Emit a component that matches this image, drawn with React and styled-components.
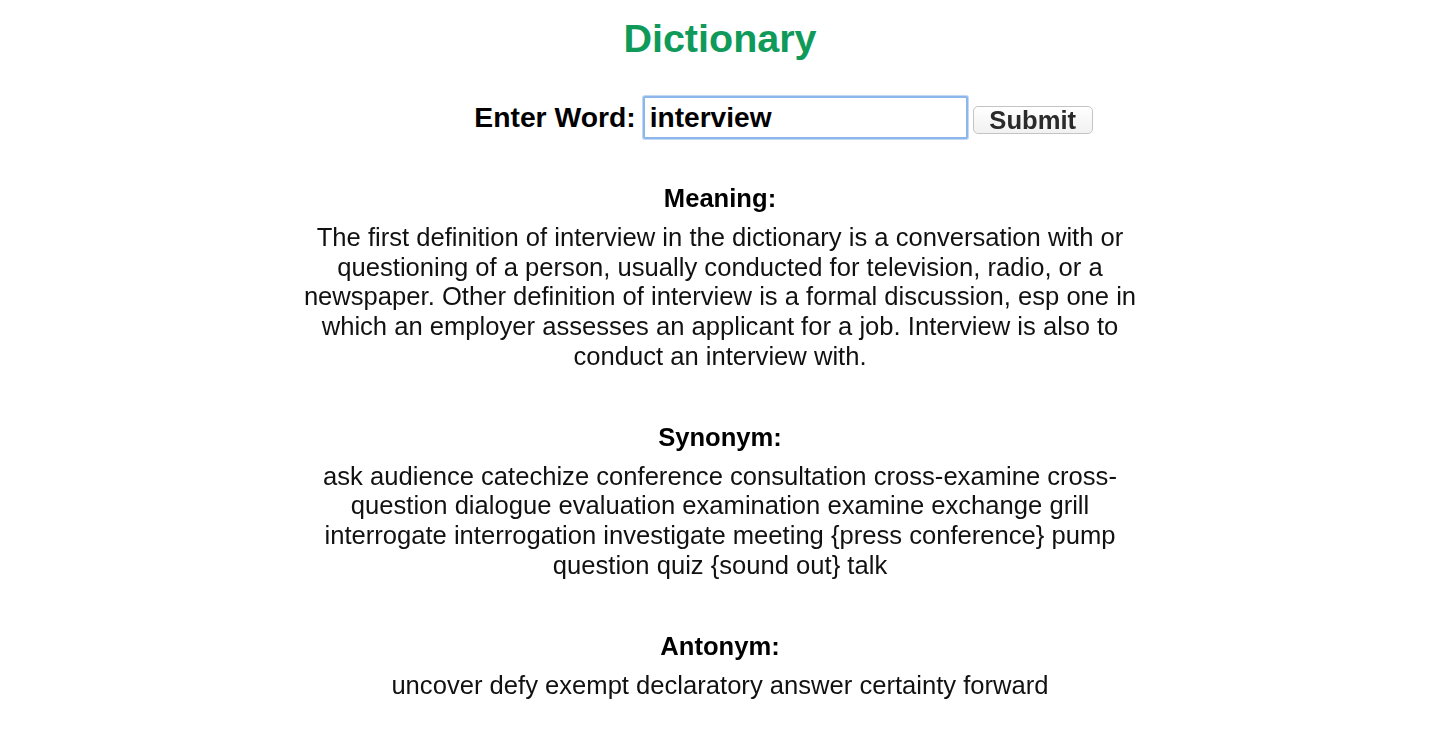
import React, { useEffect, useRef } from "react";
import styled, { createGlobalStyle } from "styled-components";

const Global = createGlobalStyle`
  html, body { margin: 0; padding: 0; background: #fff; }
  body { font-family: "Liberation Sans", Arial, sans-serif; color: #000; }
`;

const Page = styled.div`
  display: flex;
  flex-direction: column;
  align-items: center;
  padding-top: 15px;
`;

const Title = styled.h1`
  margin: 0;
  font-size: 39.5px;
  line-height: 46px;
  font-weight: 700;
  color: #0f9a5a;
`;

const Form = styled.form`
  display: flex;
  align-items: center;
  margin-top: 35px;
  padding-left: 127px;
`;

const Label = styled.label`
  font-size: 28.3px;
  font-weight: 700;
  margin-right: 7px;
`;

const Input = styled.input`
  box-sizing: border-box;
  width: 325px;
  height: 43px;
  border: 2px solid #8db6ea;
  box-shadow: 0 0 0 1px #c2d9f5;
  border-radius: 2px;
  outline: none;
  padding: 0 0 0 5px;
  font-family: "Liberation Sans", Arial, sans-serif;
  font-size: 28.1px;
  font-weight: 700;
  color: #000;
  caret-color: #000;
`;

const Button = styled.button`
  box-sizing: border-box;
  width: 120px;
  height: 28px;
  margin: 5px 0 0 5px;
  padding: 0;
  border: 1px solid #c4c4c4;
  border-radius: 5px;
  background: linear-gradient(#ffffff, #f1f1f1);
  font-family: "Liberation Sans", Arial, sans-serif;
  font-size: 25.6px;
  line-height: 26px;
  font-weight: 700;
  color: #2a2a2a;
`;

const Results = styled.div`
  display: flex;
  flex-direction: column;
  gap: 51.6px;
  width: 860px;
  margin-top: 45px;
  text-align: center;
`;

const Section = styled.section`
  display: flex;
  flex-direction: column;
  gap: 9.4px;
`;

const Heading = styled.h3`
  margin: 0;
  font-size: 25.6px;
  line-height: 29.4px;
  font-weight: 700;
`;

const Body = styled.p`
  margin: 0;
  font-size: 25.6px;
  line-height: 29.7px;
  color: #111;
`;

const data = [
  {
    label: "Meaning:",
    text:
      "The first definition of interview in the dictionary is a conversation with or questioning of a person, usually conducted for television, radio, or a newspaper. Other definition of interview is a formal discussion, esp one in which an employer assesses an applicant for a job. Interview is also to conduct an interview with.",
  },
  {
    label: "Synonym:",
    text:
      "ask audience catechize conference consultation cross-examine cross-question dialogue evaluation examination examine exchange grill interrogate interrogation investigate meeting {press conference} pump question quiz {sound out} talk",
  },
  {
    label: "Antonym:",
    text: "uncover defy exempt declaratory answer certainty forward",
  },
];

export default function App() {
  const ref = useRef(null);
  useEffect(() => {
    const el = ref.current;
    if (el) {
      el.focus();
      const n = el.value.length;
      el.setSelectionRange(n, n);
    }
  }, []);
  return (
    <>
      <Global />
      <Page>
        <Title>Dictionary</Title>
        <Form onSubmit={(e) => e.preventDefault()}>
          <Label htmlFor="word">Enter Word:</Label>
          <Input id="word" ref={ref} defaultValue="interview" />
          <Button type="submit">Submit</Button>
        </Form>
        <Results>
          {data.map((d) => (
            <Section key={d.label}>
              <Heading>{d.label}</Heading>
              <Body>{d.text}</Body>
            </Section>
          ))}
        </Results>
      </Page>
    </>
  );
}
